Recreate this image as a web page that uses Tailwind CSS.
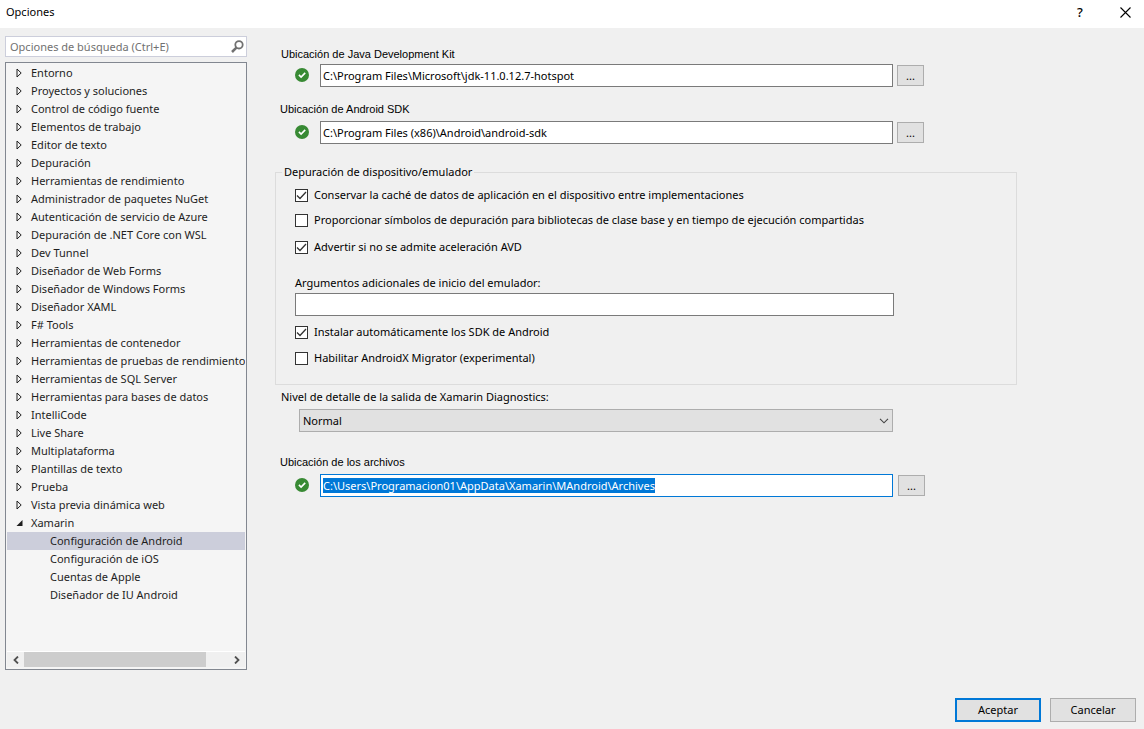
<!DOCTYPE html>
<html lang="es">
<head>
<meta charset="utf-8">
<meta name="viewport" content="width=device-width, initial-scale=1">
<title>Opciones</title>
<script src="https://cdn.jsdelivr.net/npm/@tailwindcss/browser@4"></script>
</head>
<body class="flex min-h-screen flex-col bg-[#f0f0f0] font-['Noto_Sans',sans-serif] text-[11px] leading-4 text-black">

<svg class="hidden" aria-hidden="true">
  <symbol id="closed" viewBox="0 0 6 10"><path d="M.5 1v8l4.2-4z" fill="none" stroke="#1e1e1e"/></symbol>
  <symbol id="open" viewBox="0 0 7 7"><path d="M6.500 .5v6h-6z" fill="#1e1e1e"/></symbol>
  <symbol id="ok" viewBox="0 0 14 14"><circle cx="7" cy="7" r="7" fill="#388a34"/><path d="M3.900 6.900l2.200 2.200 4.100-4.200" fill="none" stroke="#fff" stroke-width="1.600"/></symbol>
  <symbol id="tick" viewBox="0 0 13 13"><path d="M2 6.500l3 3 6-6.500" fill="none" stroke="#333" stroke-width="1.300"/></symbol>
</svg>

<header class="flex h-7 items-center justify-between bg-white pr-[13px] pl-[6px]">
  <h1 class="-mt-1">Opciones</h1>
  <div class="-mt-1 flex items-center gap-8">
    <button type="button" aria-label="Ayuda" class="w-4 text-center text-[13px] font-medium">?</button>
    <button type="button" aria-label="Cerrar"><svg class="size-[11px]" viewBox="0 0 11 11"><path d="M.5.5l10 10M10.500.5l-10 10" stroke="#000" stroke-width="1.100"/></svg></button>
  </div>
</header>

<div class="flex flex-1 gap-7 pt-2 pl-[5px]">
  <aside class="flex w-[242px] shrink-0 flex-col gap-[5px]">
    <div class="flex h-[21px] items-center border border-[#cccedb] bg-white pr-[2px] pl-1">
      <input type="search" aria-label="Opciones de búsqueda" placeholder="Opciones de búsqueda (Ctrl+E)" class="min-w-0 flex-1 bg-transparent outline-none placeholder:text-[#717171]">
      <svg class="size-[13px]" viewBox="0 0 13 13" fill="none" stroke="#717171" aria-hidden="true"><circle cx="8" cy="4.800" r="3.700" stroke-width="1.800"/><path d="M5.400 7.600L1 12" stroke-width="2.500"/></svg>
    </div>

    <nav aria-label="Categorías" class="flex flex-1 flex-col border border-[#828790] bg-[#f5f5f5] p-px text-[#1e1e1e]">
      <ul class="flex-1 overflow-hidden whitespace-nowrap [&_button]:flex [&_button]:h-[18px] [&_button]:w-full [&_button]:items-center [&_button]:gap-2 [&_button]:pl-[9px] [&_svg]:h-[10px] [&_svg]:w-[7px] [&_svg]:shrink-0">
        <li><button type="button"><svg><use href="#closed"/></svg>Entorno</button></li>
        <li><button type="button"><svg><use href="#closed"/></svg>Proyectos y soluciones</button></li>
        <li><button type="button"><svg><use href="#closed"/></svg>Control de código fuente</button></li>
        <li><button type="button"><svg><use href="#closed"/></svg>Elementos de trabajo</button></li>
        <li><button type="button"><svg><use href="#closed"/></svg>Editor de texto</button></li>
        <li><button type="button"><svg><use href="#closed"/></svg>Depuración</button></li>
        <li><button type="button"><svg><use href="#closed"/></svg>Herramientas de rendimiento</button></li>
        <li><button type="button"><svg><use href="#closed"/></svg>Administrador de paquetes NuGet</button></li>
        <li><button type="button"><svg><use href="#closed"/></svg>Autenticación de servicio de Azure</button></li>
        <li><button type="button"><svg><use href="#closed"/></svg>Depuración de .NET Core con WSL</button></li>
        <li><button type="button"><svg><use href="#closed"/></svg>Dev Tunnel</button></li>
        <li><button type="button"><svg><use href="#closed"/></svg>Diseñador de Web Forms</button></li>
        <li><button type="button"><svg><use href="#closed"/></svg>Diseñador de Windows Forms</button></li>
        <li><button type="button"><svg><use href="#closed"/></svg>Diseñador XAML</button></li>
        <li><button type="button"><svg><use href="#closed"/></svg>F# Tools</button></li>
        <li><button type="button"><svg><use href="#closed"/></svg>Herramientas de contenedor</button></li>
        <li><button type="button"><svg><use href="#closed"/></svg>Herramientas de pruebas de rendimiento</button></li>
        <li><button type="button"><svg><use href="#closed"/></svg>Herramientas de SQL Server</button></li>
        <li><button type="button"><svg><use href="#closed"/></svg>Herramientas para bases de datos</button></li>
        <li><button type="button"><svg><use href="#closed"/></svg>IntelliCode</button></li>
        <li><button type="button"><svg><use href="#closed"/></svg>Live Share</button></li>
        <li><button type="button"><svg><use href="#closed"/></svg>Multiplataforma</button></li>
        <li><button type="button"><svg><use href="#closed"/></svg>Plantillas de texto</button></li>
        <li><button type="button"><svg><use href="#closed"/></svg>Prueba</button></li>
        <li><button type="button"><svg><use href="#closed"/></svg>Vista previa dinámica web</button></li>
        <li><button type="button" aria-expanded="true"><svg><use href="#open"/></svg>Xamarin</button>
          <ul>
            <li class="bg-[#cccedb]"><button type="button" aria-current="true"><span class="w-[26px]"></span>Configuración de Android</button></li>
            <li><button type="button"><span class="w-[26px]"></span>Configuración de iOS</button></li>
            <li><button type="button"><span class="w-[26px]"></span>Cuentas de Apple</button></li>
            <li><button type="button"><span class="w-[26px]"></span>Diseñador de IU Android</button></li>
          </ul>
        </li>
      </ul>
      <div class="flex h-[17px] border-y border-t-white border-b-[#f5f5f5] bg-[#f0f0f0]">
        <button type="button" aria-label="Desplazar a la izquierda" class="flex w-[17px] items-center justify-center"><svg class="h-2 w-[6px]" viewBox="0 0 6 8"><path d="M5 .5L1.500 4 5 7.500" fill="none" stroke="#505050" stroke-width="1.800"/></svg></button>
        <div class="flex-1"><div class="h-full w-[89%] bg-[#cdcdcd]"></div></div>
        <button type="button" aria-label="Desplazar a la derecha" class="flex w-[17px] items-center justify-center"><svg class="h-2 w-[6px]" viewBox="0 0 6 8"><path d="M1 .5L4.500 4 1 7.500" fill="none" stroke="#505050" stroke-width="1.800"/></svg></button>
      </div>
    </nav>
  </aside>

  <main class="min-w-0 flex-1 pr-[127px]">
    <label for="jdk" class="mt-[10px] block pl-[6px] font-['Liberation_Sans',sans-serif]">Ubicación de Java Development Kit</label>
    <div class="mt-[2px] flex items-center pr-[93px] pl-5">
      <svg class="mr-[11px] size-[14px] shrink-0 -translate-y-px" role="img" aria-label="Válido"><use href="#ok"/></svg>
      <input id="jdk" type="text" value="C:\Program Files\Microsoft\jdk-11.0.12.7-hotspot" class="h-[23px] min-w-0 flex-1 border border-[#7a7a7a] bg-white px-[2px] outline-none">
      <button type="button" aria-label="Examinar JDK" class="ml-1 h-[21px] w-[27px] shrink-0 border border-[#adadad] bg-[#e1e1e1]">...</button>
    </div>

    <label for="sdk" class="mt-[14px] block pl-[5px] font-['Liberation_Sans',sans-serif]">Ubicación de Android SDK</label>
    <div class="mt-1 flex items-center pr-[93px] pl-5">
      <svg class="mr-[11px] size-[14px] shrink-0 -translate-y-px" role="img" aria-label="Válido"><use href="#ok"/></svg>
      <input id="sdk" type="text" value="C:\Program Files (x86)\Android\android-sdk" class="h-[23px] min-w-0 flex-1 border border-[#7a7a7a] bg-white px-[2px] outline-none">
      <button type="button" aria-label="Examinar SDK" class="ml-1 h-[21px] w-[27px] shrink-0 border border-[#adadad] bg-[#e1e1e1]">...</button>
    </div>

    <fieldset class="mt-5 border border-[#dcdcdc] pb-[18px] pl-[19px]">
      <legend class="-ml-[13px] px-[2px]">Depuración de dispositivo/emulador</legend>
      <label class="mt-[7px] flex items-center gap-[6px]">
        <span class="grid"><input type="checkbox" checked class="peer col-start-1 row-start-1 size-[13px] appearance-none border border-[#333] bg-white"><svg class="pointer-events-none col-start-1 row-start-1 hidden size-[13px] peer-checked:block"><use href="#tick"/></svg></span>
        Conservar la caché de datos de aplicación en el dispositivo entre implementaciones
      </label>
      <label class="mt-[9px] flex items-center gap-[6px]">
        <span class="grid"><input type="checkbox" class="peer col-start-1 row-start-1 size-[13px] appearance-none border border-[#333] bg-white"><svg class="pointer-events-none col-start-1 row-start-1 hidden size-[13px] peer-checked:block"><use href="#tick"/></svg></span>
        Proporcionar símbolos de depuración para bibliotecas de clase base y en tiempo de ejecución compartidas
      </label>
      <label class="mt-[11px] flex items-center gap-[6px]">
        <span class="grid"><input type="checkbox" checked class="peer col-start-1 row-start-1 size-[13px] appearance-none border border-[#333] bg-white"><svg class="pointer-events-none col-start-1 row-start-1 hidden size-[13px] peer-checked:block"><use href="#tick"/></svg></span>
        Advertir si no se admite aceleración AVD
      </label>
      <label for="args" class="mt-5 block">Argumentos adicionales de inicio del emulador:</label>
      <div class="mt-[2px] flex pr-[122px]">
        <input id="args" type="text" class="h-[23px] min-w-0 flex-1 border border-[#7a7a7a] bg-white px-[2px] outline-none">
      </div>
      <label class="mt-2 flex items-center gap-[6px]">
        <span class="grid"><input type="checkbox" checked class="peer col-start-1 row-start-1 size-[13px] appearance-none border border-[#333] bg-white"><svg class="pointer-events-none col-start-1 row-start-1 hidden size-[13px] peer-checked:block"><use href="#tick"/></svg></span>
        Instalar automáticamente los SDK de Android
      </label>
      <label class="mt-[10px] flex items-center gap-[6px]">
        <span class="grid"><input type="checkbox" class="peer col-start-1 row-start-1 size-[13px] appearance-none border border-[#333] bg-white"><svg class="pointer-events-none col-start-1 row-start-1 hidden size-[13px] peer-checked:block"><use href="#tick"/></svg></span>
        Habilitar AndroidX Migrator (experimental)
      </label>
    </fieldset>

    <label for="level" class="mt-1 block pl-[6px]">Nivel de detalle de la salida de Xamarin Diagnostics:</label>
    <div class="mt-1 grid items-center pr-[124px] pl-6">
      <select id="level" class="col-start-1 row-start-1 h-[23px] appearance-none border border-[#adadad] bg-[#e1e1e1] px-[3px] outline-none"><option>Normal</option></select>
      <svg class="pointer-events-none col-start-1 row-start-1 mr-1 h-[6px] w-[10px] justify-self-end" viewBox="0 0 10 6"><path d="M1 .8l4 4 4-4" fill="none" stroke="#444" stroke-width="1.100"/></svg>
    </div>

    <label for="files" class="mt-[22px] block pl-[5px] font-['Liberation_Sans',sans-serif]">Ubicación de los archivos</label>
    <div class="mt-1 flex items-center pr-[92px] pl-5">
      <svg class="mr-[11px] size-[14px] shrink-0 -translate-y-px" role="img" aria-label="Válido"><use href="#ok"/></svg>
      <input id="files" type="text" autofocus value="C:\Users\Programacion01\AppData\Xamarin\MAndroid\Archives" class="h-[23px] min-w-0 flex-1 border border-[#0078d7] bg-white px-[2px] outline-none selection:bg-[#0078d7] selection:text-white">
      <button type="button" aria-label="Examinar archivos" class="ml-[5px] h-[21px] w-[27px] shrink-0 border border-[#adadad] bg-[#e1e1e1]">...</button>
    </div>
  </main>
</div>

<footer class="flex justify-end gap-[9px] pt-7 pr-2 pb-[7px]">
  <button type="submit" class="h-6 w-[86px] border-2 border-[#0078d7] bg-[#e1e1e1]">Aceptar</button>
  <button type="button" class="h-6 w-[86px] border border-[#adadad] bg-[#e1e1e1]">Cancelar</button>
</footer>

<script>
  const files = document.getElementById('files');
  files.focus();
  files.select();
</script>
</body>
</html>
